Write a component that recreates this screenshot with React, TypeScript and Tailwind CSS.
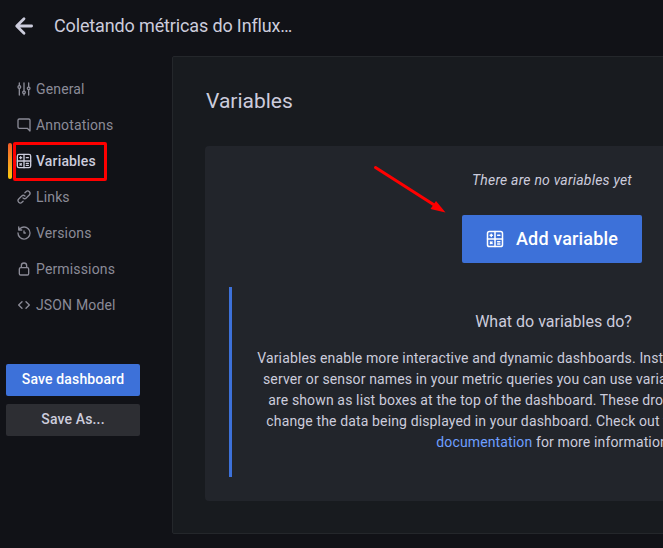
import React from 'react';

type IconProps = { size?: number };

const glyph = (d: string) =>
  function Glyph({ size = 16 }: IconProps) {
    return (
      <svg width={size} height={size} viewBox="0 0 24 24" fill="currentColor" className="block shrink-0">
        <path d={d} />
      </svg>
    );
  };

const SlidersIcon = glyph(
  'M20,8.18V3a1,1,0,0,0-2,0V8.18a3,3,0,0,0,0,5.64V21a1,1,0,0,0,2,0V13.82a3,3,0,0,0,0-5.64ZM19,12a1,1,0,1,1,1-1A1,1,0,0,1,19,12Zm-6,2.18V3a1,1,0,0,0-2,0V14.18a3,3,0,0,0,0,5.64V21a1,1,0,0,0,2,0V19.82a3,3,0,0,0,0-5.64ZM12,18a1,1,0,1,1,1-1A1,1,0,0,1,12,18ZM6,6.18V3A1,1,0,0,0,4,3V6.18a3,3,0,0,0,0,5.64V21a1,1,0,0,0,2,0V11.82A3,3,0,0,0,6,6.18ZM5,10A1,1,0,1,1,6,9,1,1,0,0,1,5,10Z',
);
const CommentIcon = glyph(
  'M19,2H5A3,3,0,0,0,2,5V15a3,3,0,0,0,3,3H16.59l3.7,3.71A1,1,0,0,0,21,22a.84.84,0,0,0,.38-.08A1,1,0,0,0,22,21V5A3,3,0,0,0,19,2Zm1,16.59-2.29-2.3A1,1,0,0,0,17,16H5a1,1,0,0,1-1-1V5A1,1,0,0,1,5,4H19a1,1,0,0,1,1,1Z',
);
const LinkIcon = glyph(
  'M10,17.55,8.23,19.27a2.47,2.47,0,0,1-3.5-3.5l4.54-4.55a2.46,2.46,0,0,1,3.39-.09l.12.1a1,1,0,0,0,1.4-1.43A2.75,2.75,0,0,0,14,9.59a4.46,4.46,0,0,0-6.09.22L3.31,14.36a4.48,4.48,0,0,0,6.33,6.33L11.37,19A1,1,0,0,0,10,17.55ZM20.69,3.31a4.49,4.49,0,0,0-6.33,0L12.63,5A1,1,0,0,0,14,6.45l1.73-1.72a2.47,2.47,0,0,1,3.5,3.5l-4.54,4.55a2.46,2.46,0,0,1-3.39.09l-.12-.1a1,1,0,0,0-1.4,1.43,2.75,2.75,0,0,0,.23.21,4.47,4.47,0,0,0,6.09-.22l4.55-4.55A4.49,4.49,0,0,0,20.69,3.31Z',
);
const HistoryIcon = glyph(
  'M12,2A10,10,0,0,0,5.12,4.77V3a1,1,0,0,0-2,0V7.5a1,1,0,0,0,1,1H8.62a1,1,0,0,0,0-2H6.22A8,8,0,1,1,4,12a1,1,0,0,0-2,0A10,10,0,1,0,12,2Zm0,6a1,1,0,0,0-1,1v3a1,1,0,0,0,1,1h2a1,1,0,0,0,0-2H13V9A1,1,0,0,0,12,8Z',
);
const LockIcon = glyph(
  'M17,9V7A5,5,0,0,0,7,7V9a3,3,0,0,0-3,3v7a3,3,0,0,0,3,3H17a3,3,0,0,0,3-3V12A3,3,0,0,0,17,9ZM9,7a3,3,0,0,1,6,0V9H9Zm9,12a1,1,0,0,1-1,1H7a1,1,0,0,1-1-1V12a1,1,0,0,1,1-1H17a1,1,0,0,1,1,1Z',
);
const BracketsIcon = glyph(
  'M9.71,6.29a1,1,0,0,0-1.42,0l-5,5a1,1,0,0,0,0,1.42l5,5a1,1,0,0,0,1.42,0,1,1,0,0,0,0-1.42L5.41,12l4.3-4.29A1,1,0,0,0,9.71,6.29Zm11,5-5-5a1,1,0,0,0-1.42,1.42L18.59,12l-4.3,4.29a1,1,0,0,0,0,1.42,1,1,0,0,0,1.42,0l5-5A1,1,0,0,0,20.71,11.29Z',
);

function CalculatorIcon({ size = 16 }: IconProps) {
  return (
    <svg
      width={size}
      height={size}
      viewBox="0 0 24 24"
      fill="none"
      stroke="currentColor"
      strokeWidth={2}
      strokeLinecap="round"
      className="block shrink-0"
    >
      <rect x="2" y="2" width="20" height="20" rx="2.5" />
      <path d="M12 2v20M2 12h20M5.5 7h3M7 5.5v3M15.5 7h3M5.9 15.9l2.2 2.2M8.1 15.9l-2.2 2.2M15.5 15.6h3M15.5 18.6h3" />
    </svg>
  );
}

const items = [
  { label: 'General', Icon: SlidersIcon },
  { label: 'Annotations', Icon: CommentIcon },
  { label: 'Variables', Icon: CalculatorIcon, active: true },
  { label: 'Links', Icon: LinkIcon },
  { label: 'Versions', Icon: HistoryIcon },
  { label: 'Permissions', Icon: LockIcon },
  { label: 'JSON Model', Icon: BracketsIcon },
];

export default function App() {
  return (
    <div className="relative h-[548px] w-[663px] overflow-hidden bg-[#111217] font-[Roboto,sans-serif] text-sm tracking-[0.15px] text-[#ccccdc]">
      <header className="flex h-14 items-center pb-1 pl-3">
        <svg
          width="24"
          height="24"
          viewBox="0 0 24 24"
          fill="none"
          stroke="currentColor"
          strokeWidth="2.8"
          strokeLinecap="round"
          strokeLinejoin="round"
        >
          <path d="M19.6 12H5M12 4.8L4.7 12L12 19.2" />
        </svg>
        <h1 className="ml-[18px] text-lg leading-6 tracking-[-0.14px]">Coletando métricas do Influx…</h1>
      </header>

      <div className="flex">
        <aside className="w-[172px] shrink-0 pt-[15px]">
          <nav className="flex flex-col">
            {items.map(({ label, Icon, active }) => (
              <a key={label} className="flex h-9 items-center pl-2">
                <span
                  className={
                    active ? 'h-9 w-1 rounded-xs bg-linear-to-b from-[#f05a28] to-[#fbca0a]' : 'h-9 w-1'
                  }
                />
                <span
                  className={
                    active
                      ? 'ml-1 flex items-center gap-1 font-medium text-[#ccccdc]'
                      : 'ml-1 flex items-center gap-1 text-[#8b8b97]'
                  }
                >
                  <Icon />
                  {label}
                </span>
              </a>
            ))}
          </nav>
          <div className="mt-[41px] ml-1.5 flex w-[134px] flex-col gap-2 font-medium">
            <button className="h-8 rounded-xs bg-[#3d71d9] pb-0.5 text-white">Save dashboard</button>
            <button className="h-8 rounded-xs bg-[#2d2e33] pb-0.5">Save As...</button>
          </div>
        </aside>

        <main className="h-[478px] w-[760px] shrink-0 rounded-xs border border-[#24272b] bg-[#181b1f] px-8 pt-8">
          <h2 className="pl-px text-[21px] leading-6 tracking-normal">Variables</h2>
          <section className="mt-[33px] flex h-[355px] flex-col items-center rounded-sm bg-[#22252b] px-6 pt-6">
            <p className="text-sm leading-[21px] tracking-[0.2px] italic">There are no variables yet</p>
            <button className="mt-6 flex h-12 w-[180px] shrink-0 items-center justify-center gap-3 rounded-xs bg-[#3d71d9] text-lg font-medium tracking-[0.15px] text-white">
              <CalculatorIcon size={18} />
              Add variable
            </button>
            <div className="mt-6 h-[190px] w-full border-l-3 border-[#3d71d9] pt-6 text-center">
              <h3 className="text-base leading-[22px] tracking-normal">What do variables do?</h3>
              <p className="mt-[15px] pl-px leading-[21px] tracking-[0.14px] whitespace-nowrap">
                Variables enable more interactive and dynamic dashboards. Instead of hard-coding things like
                <br />
                server or sensor names in your metric queries you can use variables in their place. Variables
                <br />
                are shown as list boxes at the top of the dashboard. These drop-down lists make it easy to
                <br />
                change the data being displayed in your dashboard. Check out the{' '}
                <span className="text-[#6e9fff]">Templates and variables</span>
                <br />
                <span className="text-[#6e9fff]">documentation</span> for more information.
              </p>
            </div>
          </section>
        </main>
      </div>

      {/* Annotation marks over the page */}
      <div className="absolute top-[142px] left-[13px] h-[39px] w-[94px] rounded-xs border-3 border-[#ff0000]" />
      <svg className="absolute top-[160px] left-[370px]" width="80" height="56" viewBox="0 0 80 56">
        <path d="M5.5 7.5L65 45.5" stroke="#ff0000" strokeWidth="3" strokeLinecap="round" />
        <path d="M75.5 52.5L60.5 49L66 41Z" fill="#ff0000" />
      </svg>
    </div>
  );
}
